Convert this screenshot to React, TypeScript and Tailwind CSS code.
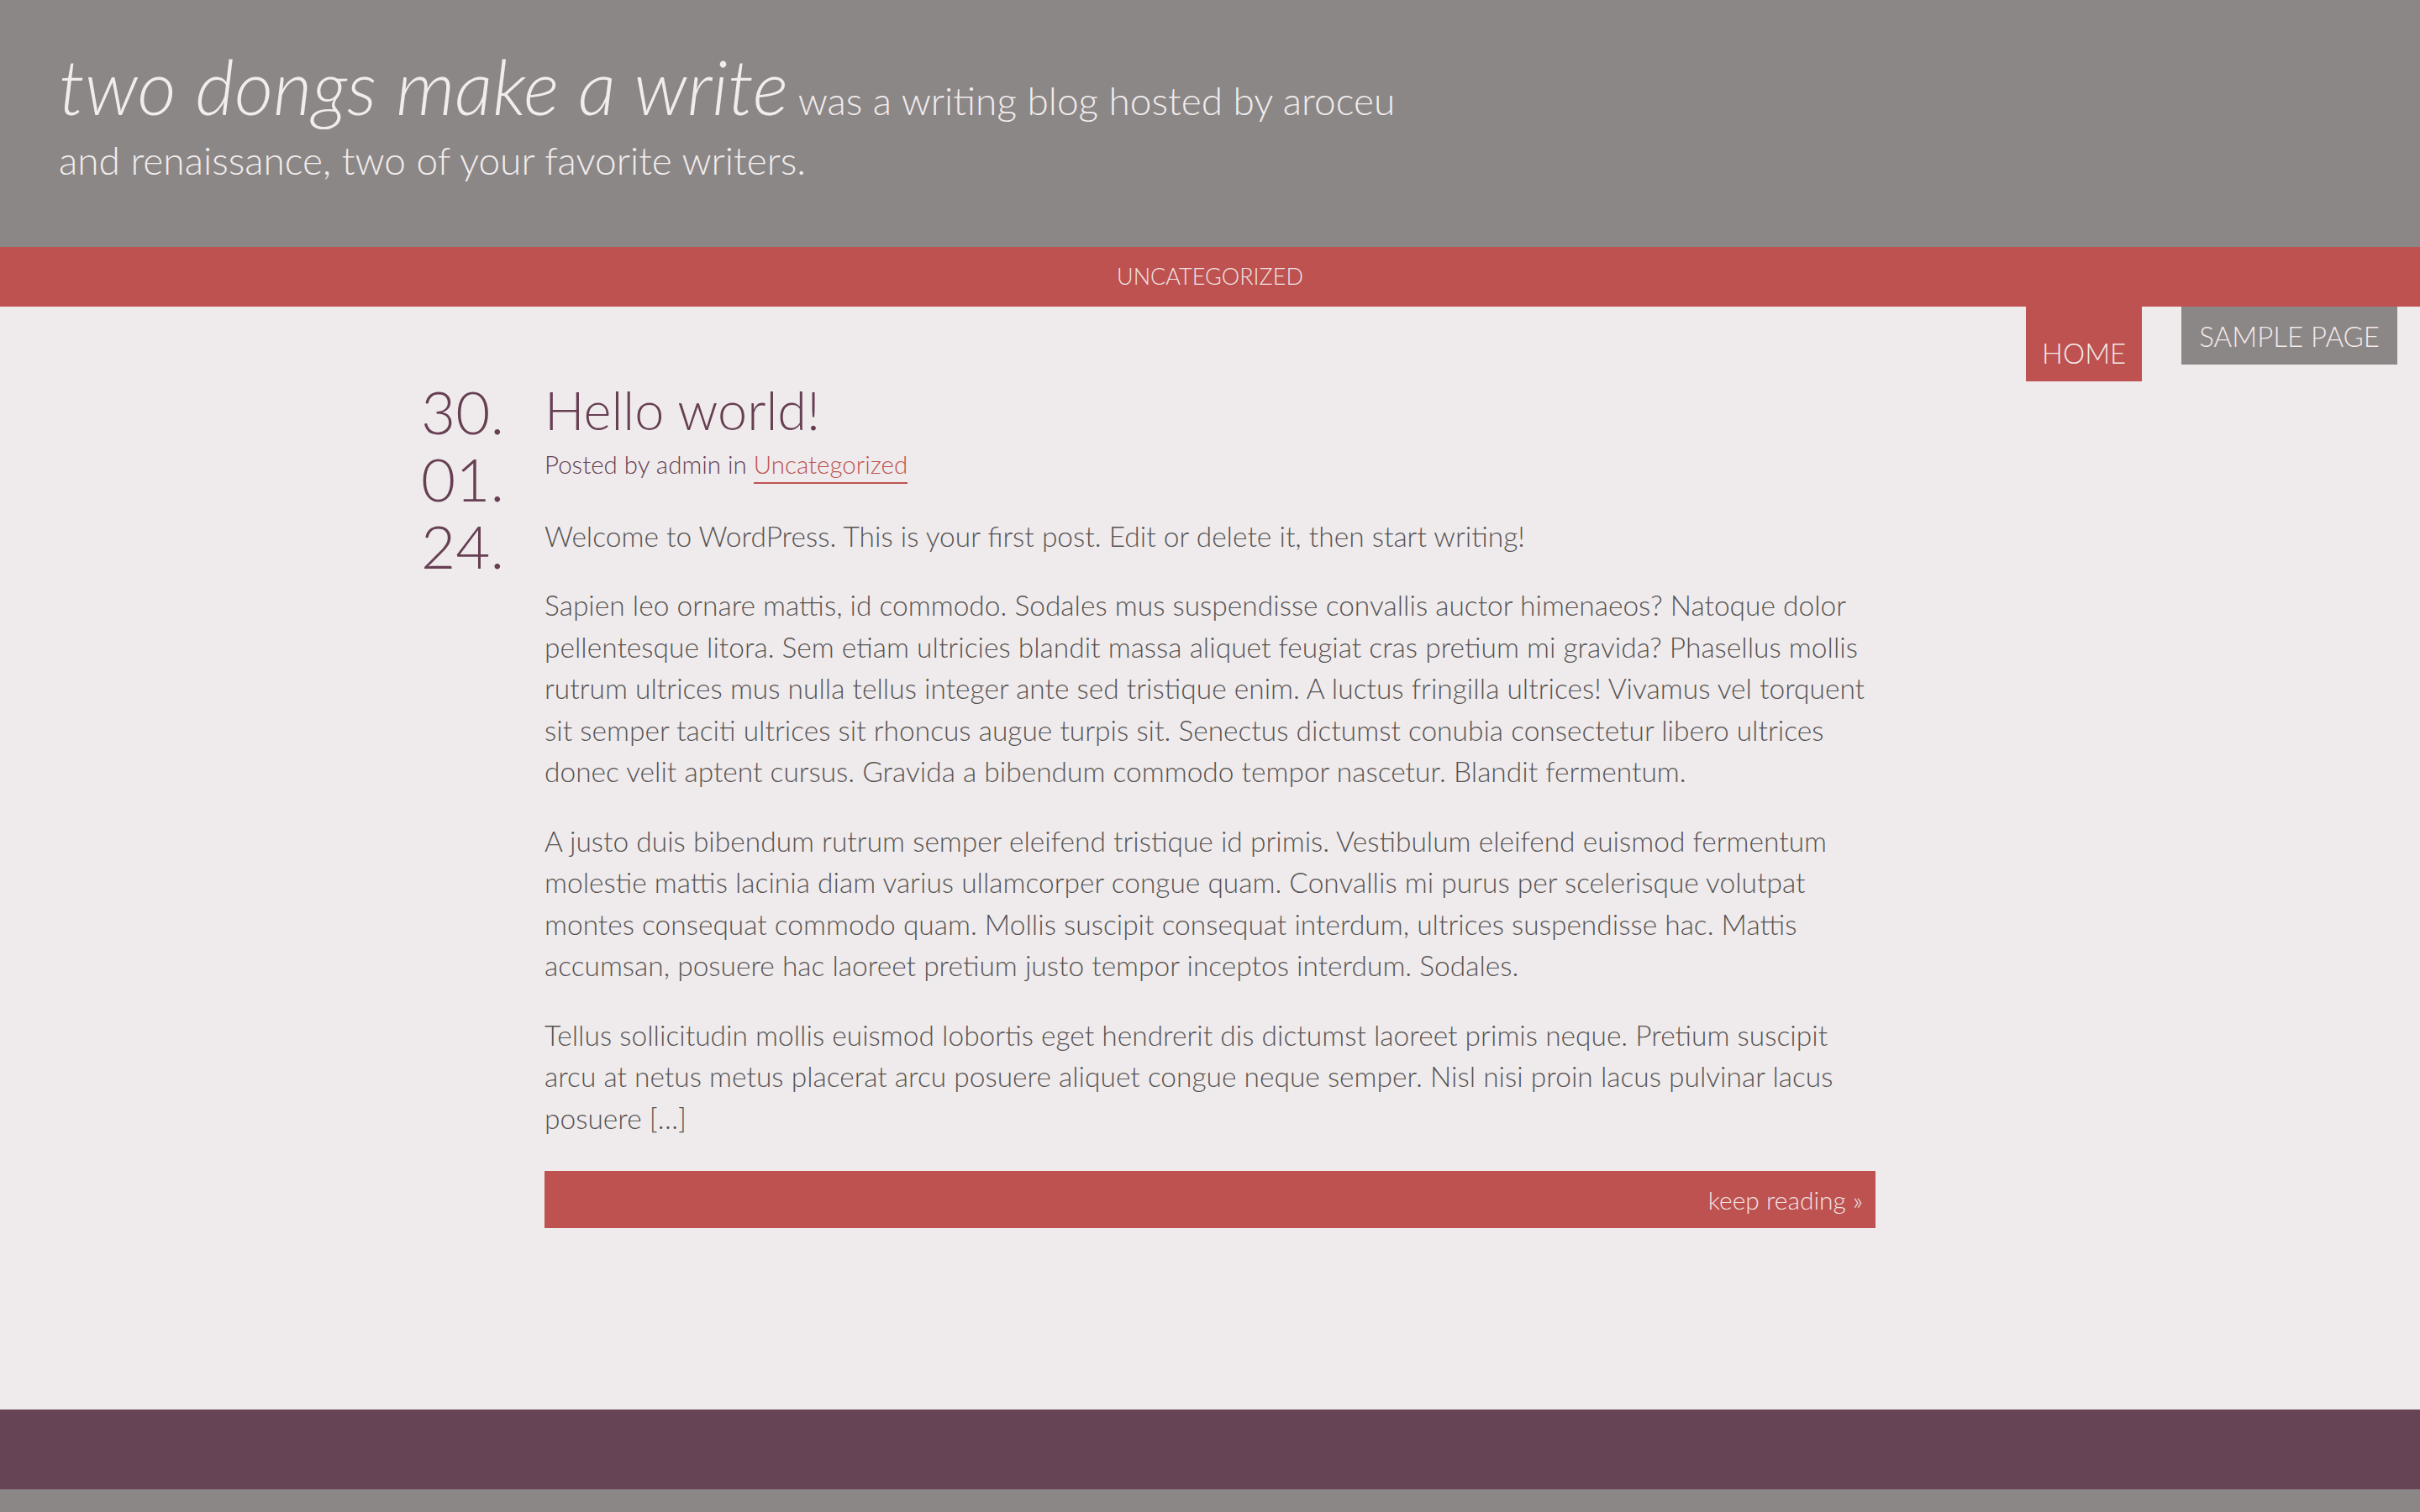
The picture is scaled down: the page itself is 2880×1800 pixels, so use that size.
const paragraphs = [
  "Welcome to WordPress. This is your first post. Edit or delete it, then start writing!",
  "Sapien leo ornare mattis, id commodo. Sodales mus suspendisse convallis auctor himenaeos? Natoque dolor pellentesque litora. Sem etiam ultricies blandit massa aliquet feugiat cras pretium mi gravida? Phasellus mollis rutrum ultrices mus nulla tellus integer ante sed tristique enim. A luctus fringilla ultrices! Vivamus vel torquent sit semper taciti ultrices sit rhoncus augue turpis sit. Senectus dictumst conubia consectetur libero ultrices donec velit aptent cursus. Gravida a bibendum commodo tempor nascetur. Blandit fermentum.",
  "A justo duis bibendum rutrum semper eleifend tristique id primis. Vestibulum eleifend euismod fermentum molestie mattis lacinia diam varius ullamcorper congue quam. Convallis mi purus per scelerisque volutpat montes consequat commodo quam. Mollis suscipit consequat interdum, ultrices suspendisse hac. Mattis accumsan, posuere hac laoreet pretium justo tempor inceptos interdum. Sodales.",
  "Tellus sollicitudin mollis euismod lobortis eget hendrerit dis dictumst laoreet primis neque. Pretium suscipit arcu at netus metus placerat arcu posuere aliquet congue neque semper. Nisl nisi proin lacus pulvinar lacus posuere […]",
];

const App = () => {
  return (
    <div className="min-h-screen flex flex-col bg-[#efebec] font-['Lato',sans-serif] font-light">
      <header className="h-[294px] bg-[#8c8787] px-[70px] pt-[67px]">
        <p className="text-[46px] leading-[71px] text-[#f2eded]">
          <span className="italic text-[90px]">two dongs make a write</span> was a
          writing blog hosted by aroceu
          <br />
          and renaissance, two of your favorite writers.
        </p>
      </header>

      <nav className="h-[71px] bg-[#bd5250] flex items-center justify-center">
        <a className="text-[27px] uppercase text-[#f1e4e4]">Uncategorized</a>
      </nav>

      <div className="flex justify-end items-start gap-[47px] pr-[27px]">
        <a className="h-[89px] bg-[#bd5250] px-[19px] pt-[35px] text-[33px] leading-[40px] text-[#f3eaea]">
          HOME
        </a>
        <a className="h-[69px] bg-[#8c8787] px-[21px] pt-[15px] text-[33px] leading-[40px] text-[#f3eaea]">
          SAMPLE PAGE
        </a>
      </div>

      <main className="grid grid-cols-[1fr_1584px_1fr]">
        <div className="justify-self-end mr-[48px] -mt-[4px] text-[71px] leading-[80px] text-[#663f52]">
          <div>30.</div>
          <div>01.</div>
          <div>24.</div>
        </div>

        <article>
          <h2 className="text-[63px] leading-[68px] text-[#663f52]">Hello world!</h2>
          <p className="mt-[6px] text-[29.5px] leading-[49.5px] text-[#663f52]">
            Posted by admin in{" "}
            <a className="text-[#bd5250] border-b-2 border-[#bd5250] pb-[4px]">
              Uncategorized
            </a>
          </p>

          <div className="mt-[36px] text-[33.5px] leading-[49.5px] text-[#575353]">
            {paragraphs.map((p, i) => (
              <p key={i} className="mb-[33px]">
                {p}
              </p>
            ))}
          </div>

          <div className="h-[68px] bg-[#bd5250] flex items-center justify-end pr-[15px] mt-[38px]">
            <a className="text-[30px] text-[#f1e4e4]">keep reading »</a>
          </div>
        </article>
        <div />
      </main>

      <div className="flex-1" />

      <footer className="h-[95px] bg-[#674356]" />
      <div className="h-[27px] bg-[#8c8787]" />
    </div>
  );
};

export default App;
